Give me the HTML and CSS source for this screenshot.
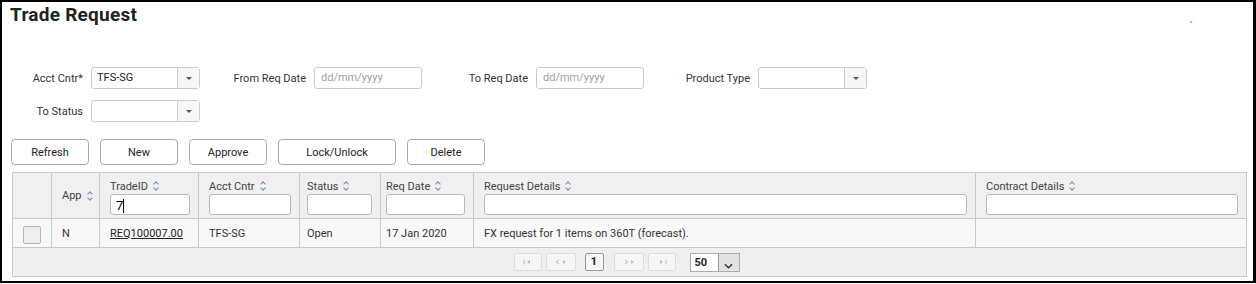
FILE: index.html
```html
<!DOCTYPE html>
<html>
<head>
    <title>Trade Request</title>
    <link rel="stylesheet" href="styles.css">
</head>
<body>
<div class="page">
    <!-- Title -->
    <div class="title_row">
        <h1>Trade Request</h1>
        <span class="dot"></span>
    </div>

    <!-- Filters -->
    <div class="filters">
        <div class="field">
            <label class="first">Acct Cntr*</label>
            <div class="select"><span class="val">TFS-SG</span><span class="arrow"></span></div>
        </div>
        <div class="field">
            <label>From Req Date</label>
            <div class="input ph">dd/mm/yyyy</div>
        </div>
        <div class="field">
            <label>To Req Date</label>
            <div class="input ph">dd/mm/yyyy</div>
        </div>
        <div class="field">
            <label>Product Type</label>
            <div class="select"><span class="val"></span><span class="arrow"></span></div>
        </div>
    </div>
    <div class="filters row2">
        <div class="field">
            <label class="first">To Status</label>
            <div class="select"><span class="val"></span><span class="arrow"></span></div>
        </div>
    </div>

    <!-- Buttons -->
    <div class="buttons">
        <button>Refresh</button>
        <button>New</button>
        <button>Approve</button>
        <button class="wide">Lock/Unlock</button>
        <button>Delete</button>
    </div>

    <!-- Grid -->
    <table class="grid">
        <colgroup>
            <col style="width:39px"><col style="width:48px"><col style="width:99px"><col style="width:101px">
            <col style="width:81px"><col style="width:93px"><col style="width:502px"><col style="width:271px">
        </colgroup>
        <thead>
            <tr>
                <th></th>
                <th class="mid"><div class="hd"><span>App</span><i class="sort"></i></div></th>
                <th><div class="hd"><span>TradeID</span><i class="sort"></i></div><div class="flt">7<span class="caret"></span></div></th>
                <th><div class="hd"><span>Acct Cntr</span><i class="sort"></i></div><div class="flt"></div></th>
                <th class="p8"><div class="hd"><span>Status</span><i class="sort"></i></div><div class="flt"></div></th>
                <th class="p6"><div class="hd"><span>Req Date</span><i class="sort"></i></div><div class="flt"></div></th>
                <th><div class="hd"><span>Request Details</span><i class="sort"></i></div><div class="flt"></div></th>
                <th><div class="hd"><span>Contract Details</span><i class="sort"></i></div><div class="flt"></div></th>
            </tr>
        </thead>
        <tbody>
            <tr class="data">
                <td class="chk"><span class="box"></span></td>
                <td>N</td>
                <td><a href="#">REQ100007.00</a></td>
                <td>TFS-SG</td>
                <td class="p8">Open</td>
                <td class="p6">17 Jan 2020</td>
                <td>FX request for 1 items on 360T (forecast).</td>
                <td></td>
            </tr>
            <tr class="pager_row">
                <td colspan="8">
                    <div class="pager">
                        <span class="pbtn"><svg viewBox="0 0 10 6"><path class="f" d="M1 0.5V5.5" /><path class="s" d="M7 1L4 3L7 5Z"/></svg></span>
                        <span class="pbtn wide"><svg viewBox="0 0 12 6"><path class="f" d="M4 1L1 3L4 5" /><path class="s" d="M10 1L7 3L10 5Z"/></svg></span>
                        <span class="page_no">1</span>
                        <span class="pbtn wide"><svg viewBox="0 0 12 6"><path class="f" d="M2 1L5 3L2 5" /><path class="s" d="M8 1L11 3L8 5Z"/></svg></span>
                        <span class="pbtn"><svg viewBox="0 0 10 6"><path class="s" d="M3 1L6 3L3 5Z"/><path class="f" d="M9 0.5V5.5" /></svg></span>
                        <span class="size"><span class="num">50</span><span class="drop"><svg viewBox="0 0 10 6"><path d="M1 1L5 5L9 1"/></svg></span></span>
                    </div>
                </td>
            </tr>
        </tbody>
    </table>
</div>
</body>
</html>
```

FILE: styles.css
```css
body {
    margin: 0;
    font-family: Roboto, "Liberation Sans", sans-serif;
    font-size: 11px;
    color: #333;
}
.page {
    box-sizing: border-box;
    width: 1256px;
    height: 283px;
    border: 2px solid #000;
    border-right-width: 3px;
    padding: 2px 10px 0 8px;
}

/* title */
.title_row {
    display: flex;
    align-items: center;
}
h1 {
    margin: 0;
    font-size: 19px;
    line-height: 22px;
    letter-spacing: 0.25px;
    font-weight: bold;
    color: #222;
}
.dot {
    margin: 14px 51px 0 auto;
    width: 2px;
    height: 2px;
    background: #f0a0a8;
}

/* filters */
.filters {
    display: flex;
    margin-top: 41px;
}
.filters.row2 {
    margin-top: 11px;
}
.field {
    display: flex;
    align-items: center;
    gap: 8px;
    margin-right: 10px;
}
.field label {
    width: 96px;
    text-align: right;
    color: #333;
}
.field label.first {
    width: 73px;
}
.input, .select {
    box-sizing: border-box;
    height: 22px;
    border: 1px solid #ccc;
    border-radius: 3px;
    background: #fff;
}
.input {
    width: 108px;
    padding: 0 6px;
    line-height: 20px;
}
.input.ph {
    color: #a0a0a0;
}
.select {
    width: 109px;
    display: flex;
}
.select .val {
    flex: 1;
    padding: 0 5px;
    line-height: 20px;
    color: #222;
}
.select .arrow {
    width: 21px;
    border-left: 1px solid #ccc;
    background: #f7f7f7;
    position: relative;
}
.select .arrow::after {
    content: "";
    position: absolute;
    left: 8px;
    top: 9px;
    border-left: 3px solid transparent;
    border-right: 3px solid transparent;
    border-top: 3px solid #555;
}

/* buttons */
.buttons {
    display: flex;
    gap: 11px;
    margin-top: 17px;
    padding-left: 1px;
}
.buttons button {
    box-sizing: border-box;
    width: 78px;
    height: 26px;
    border: 1px solid #aaa;
    border-radius: 4px;
    background: #fff;
    font-family: Roboto, "Liberation Sans", sans-serif;
    font-size: 11px;
    color: #222;
    padding: 0;
}
.buttons button.wide {
    width: 118px;
}

/* grid */
.grid {
    margin: 7px 0 0 2px;
    width: 1234px;
    border-collapse: collapse;
    table-layout: fixed;
}
.grid th, .grid td {
    border: 1px solid #c9c9c9;
    text-align: left;
    font-weight: normal;
    padding: 0 8px 0 10px;
}
.grid th {
    background: #f0f0f0;
    padding-top: 5px;
    padding-bottom: 3px;
    vertical-align: top;
    color: #444;
}
.grid th.mid {
    vertical-align: middle;
    padding: 0 0 0 10px;
}
.grid .p8 {
    padding-left: 7px;
}
.grid .p6 {
    padding-left: 5px;
}
.hd {
    display: flex;
    align-items: center;
    gap: 4px;
    height: 16px;
    white-space: nowrap;
}

/* up/down sort chevrons */
.sort {
    flex: none;
    position: relative;
    width: 8px;
    height: 10px;
}
.sort::before, .sort::after {
    content: "";
    position: absolute;
    left: 2px;
    width: 3px;
    height: 3px;
    border: 0 solid #6f8cab;
    transform: rotate(45deg);
}
.sort::before {
    top: 1px;
    border-left-width: 1.5px;
    border-top-width: 1.5px;
}
.sort::after {
    bottom: 1px;
    border-right-width: 1.5px;
    border-bottom-width: 1.5px;
}

.flt {
    box-sizing: border-box;
    height: 21px;
    border: 1px solid #b8b8b8;
    border-radius: 3px;
    background: #fff;
    padding: 2px 5px 0;
    font-size: 13px;
    line-height: 17px;
    color: #000;
}
.caret {
    display: inline-block;
    width: 1px;
    height: 14px;
    background: #000;
    vertical-align: -3px;
}
.data td {
    height: 28px;
    background: #f8f8f8;
    color: #333;
}
.data a {
    color: #222;
    text-decoration: underline;
}
.data td.chk {
    padding: 0;
    text-align: center;
}
.chk .box {
    display: inline-block;
    box-sizing: border-box;
    width: 18px;
    height: 18px;
    margin-top: 3px;
    border: 1px solid #b5b5b5;
    border-radius: 2px;
    background: #eee;
    vertical-align: middle;
}

/* pager */
.pager_row td {
    height: 28px;
    background: #efefef;
    padding: 0;
}
.pager {
    display: flex;
    justify-content: center;
    align-items: center;
    padding-right: 6px;
}
.pbtn {
    box-sizing: border-box;
    width: 28px;
    height: 18px;
    border: 1px solid #dcdcdc;
    border-radius: 2px;
    background: #f6f6f6;
    margin-right: 4px;
    display: flex;
    align-items: center;
    justify-content: center;
}
.pbtn.wide {
    width: 30px;
}
.pbtn svg {
    width: 10px;
    height: 6px;
}
.pbtn.wide svg {
    width: 12px;
}
.pbtn .f {
    fill: none;
    stroke: #bbb;
    stroke-width: 1;
}
.pbtn .s {
    fill: #bbb;
}
.page_no {
    box-sizing: border-box;
    width: 19px;
    height: 18px;
    border: 1px solid #999;
    border-radius: 2px;
    background: #f8f8f8;
    margin: 0 10px 0 5px;
    text-align: center;
    line-height: 16px;
    font-weight: bold;
    color: #222;
}
.size {
    box-sizing: border-box;
    display: flex;
    width: 50px;
    height: 19px;
    margin-left: 10px;
    border: 1px solid #aaa;
    background: #fff;
}
.size .num {
    flex: 1;
    padding-left: 4px;
    line-height: 17px;
    font-weight: bold;
    color: #222;
}
.size .drop {
    width: 21px;
    border-left: 1px solid #999;
    background: #e2e2e2;
    display: flex;
    align-items: flex-end;
    justify-content: center;
    padding-bottom: 2px;
    box-sizing: border-box;
}
.size .drop svg {
    width: 9px;
    height: 6px;
}
.size .drop path {
    fill: none;
    stroke: #333;
    stroke-width: 1.6;
}
```
